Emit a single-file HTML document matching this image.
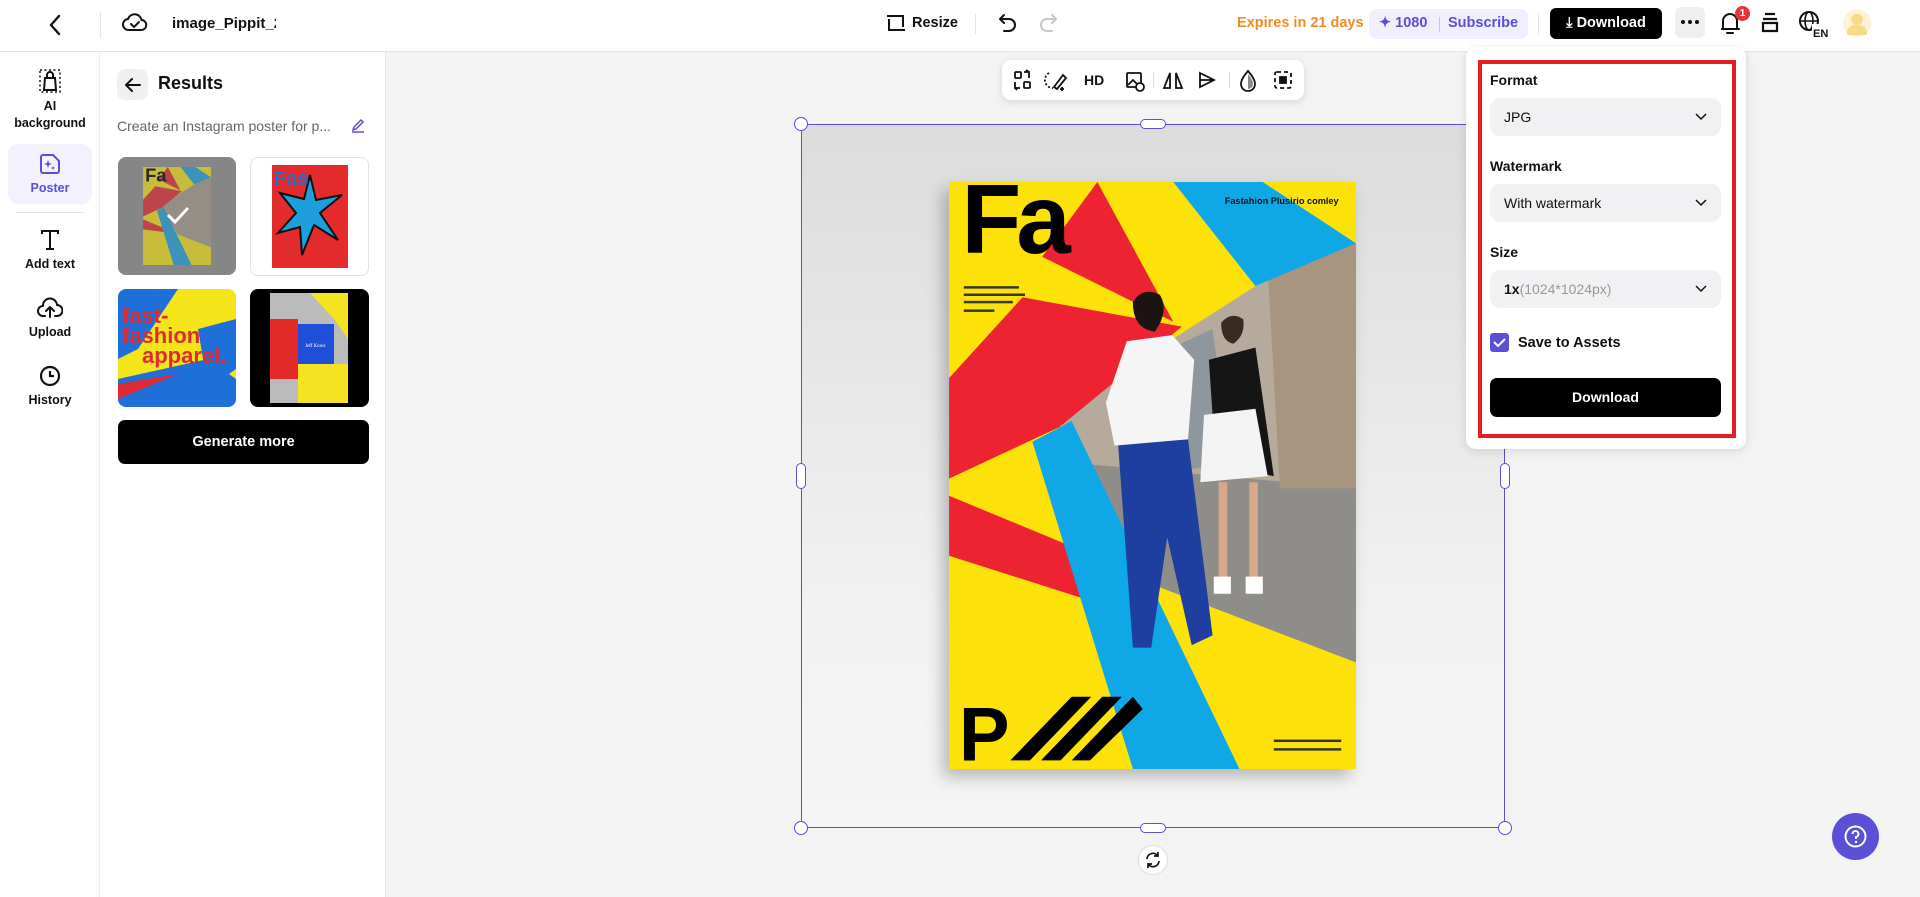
<!DOCTYPE html>
<html><head><meta charset="utf-8"><style>
*{box-sizing:border-box;margin:0;padding:0}
body{width:1920px;height:897px;overflow:hidden;font-family:"Liberation Sans",Arial,sans-serif;background:#f3f3f4;position:relative;color:#111}
.abs{position:absolute}
#top{left:0;top:0;width:1920px;height:52px;background:#fff;border-bottom:1px solid #e6e6e6}
#rail{left:0;top:52px;width:100px;height:845px;background:#fff;border-right:1px solid #eee}
#panel{left:100px;top:52px;width:286px;height:845px;background:#fff;border-right:1px solid #e6e6e6}
.ri{position:absolute;left:0;width:100px;text-align:center;font-size:12.5px;font-weight:bold;color:#111;line-height:17px}
.ri svg{display:block;margin:0 auto 4px}
.b{font-weight:bold}
.sel{background:#f1f0f2;border-radius:10px;height:38px;display:flex;align-items:center;padding:0 14px;font-size:14px;justify-content:space-between}
.lbl{font-size:14px;font-weight:bold}
.handle{position:absolute;width:14px;height:14px;border:1.5px solid #5a4fd6;background:#fff;border-radius:50%}
</style></head><body>

<div id="top" class="abs">
  <svg class="abs" style="left:47px;top:13px" width="16" height="24" viewBox="0 0 16 24"><path d="M12 3 L4 12 L12 21" fill="none" stroke="#111" stroke-width="2.4" stroke-linecap="round" stroke-linejoin="round"/></svg>
  <div class="abs" style="left:100px;top:12px;width:1px;height:26px;background:#e5e5e5"></div>
  <svg class="abs" style="left:122px;top:11px" width="26" height="22" viewBox="0 0 26 22"><path d="M7 19 H19 A5 5 0 0 0 19.5 9 A7 7 0 0 0 6 8 A5.5 5.5 0 0 0 7 19Z" fill="none" stroke="#111" stroke-width="2"/><path d="M9 13 L12 16 L17 11" fill="none" stroke="#111" stroke-width="2" stroke-linecap="round"/></svg>
  <div class="abs b" style="left:172px;top:15px;font-size:15px;width:104px;overflow:hidden;white-space:nowrap">image_Pippit_20</div>
  <svg class="abs" style="left:886px;top:13px" width="20" height="20" viewBox="0 0 20 20"><path d="M3 6 V17 H6 M3 4 V2 M17 14 V3 H14 M17 16 V18 M1 3 H15 M5 17 H19" fill="none" stroke="#111" stroke-width="2"/></svg>
  <div class="abs b" style="left:912px;top:15px;font-size:14.5px">Resize</div>
  <div class="abs" style="left:975px;top:14px;width:1px;height:20px;background:#e5e5e5"></div>
  <svg class="abs" style="left:998px;top:12px" width="20" height="22" viewBox="0 0 20 22"><path d="M6 3 L2 7 L6 11 M2 7 H11 A6 6 0 0 1 11 19 H6" fill="none" stroke="#111" stroke-width="2" stroke-linecap="round" stroke-linejoin="round"/></svg>
  <svg class="abs" style="left:1038px;top:12px" width="20" height="22" viewBox="0 0 20 22"><path d="M14 3 L18 7 L14 11 M18 7 H9 A6 6 0 0 0 9 19 H14" fill="none" stroke="#c8c8c8" stroke-width="2" stroke-linecap="round" stroke-linejoin="round"/></svg>
  <div class="abs b" style="left:1237px;top:15px;font-size:14.5px;color:#f28b1f">Expires in 21 days</div>
  <div class="abs" style="left:1369px;top:9px;width:159px;height:30px;background:#f1effd;border-radius:8px"></div>
  <div class="abs b" style="left:1379px;top:15px;font-size:14.5px;color:#5b4fd8">✦ 1080</div>
  <div class="abs" style="left:1439px;top:17px;width:1px;height:15px;background:#c9c3f0"></div>
  <div class="abs b" style="left:1448px;top:15px;font-size:14.5px;color:#5b4fd8">Subscribe</div>
  <div class="abs" style="left:1538px;top:14px;width:1px;height:20px;background:#e5e5e5"></div>
  <div class="abs" style="left:1550px;top:8px;width:112px;height:31px;background:#000;border-radius:6px;color:#fff;font-size:14.5px;font-weight:bold;text-align:center;line-height:31px">⤓ Download</div>
  <div class="abs" style="left:1675px;top:7px;width:30px;height:31px;background:#efefef;border-radius:6px"></div>
  <svg class="abs" style="left:1679px;top:19px" width="22" height="6"><circle cx="4" cy="3" r="2" fill="#111"/><circle cx="11" cy="3" r="2" fill="#111"/><circle cx="18" cy="3" r="2" fill="#111"/></svg>
  <svg class="abs" style="left:1719px;top:11px" width="22" height="24" viewBox="0 0 22 24"><path d="M4 18 V10 A7 7 0 0 1 18 10 V18 H2 H20 M8 22 H14" fill="none" stroke="#111" stroke-width="2" stroke-linecap="round"/></svg>
  <div class="abs" style="left:1735px;top:6px;width:15px;height:15px;border-radius:50%;background:#e8323c;color:#fff;font-size:10px;font-weight:bold;text-align:center;line-height:15px">1</div>
  <svg class="abs" style="left:1760px;top:12px" width="20" height="22" viewBox="0 0 20 22"><path d="M5 2 H15 M3 7 H17 M3 11 H17 V19 H3 Z" fill="none" stroke="#111" stroke-width="2.2"/></svg>
  <svg class="abs" style="left:1798px;top:10px" width="32" height="28" viewBox="0 0 32 28"><circle cx="11" cy="11" r="9" fill="none" stroke="#111" stroke-width="2"/><ellipse cx="11" cy="11" rx="4" ry="9" fill="none" stroke="#111" stroke-width="1.6"/><path d="M2 11 H20" stroke="#111" stroke-width="1.6"/><rect x="14" y="14" width="18" height="14" fill="#fff"/><text x="15" y="27" font-size="11" font-weight="bold" font-family="Liberation Sans" fill="#111">EN</text></svg>
  <div class="abs" style="left:1843px;top:9px;width:28px;height:28px;border-radius:50%;background:#fdf1d6"></div>
  <div class="abs" style="left:1851px;top:14px;width:12px;height:11px;border-radius:6px;background:#fbd98a"></div>
  <div class="abs" style="left:1847px;top:25px;width:20px;height:10px;border-radius:8px 8px 2px 2px;background:#fbd98a"></div>
</div>

<div id="rail" class="abs">
  <div class="ri" style="top:16px"><svg width="24" height="26" viewBox="0 0 24 26"><rect x="2" y="2" width="20" height="22" fill="none" stroke="#111" stroke-width="1.5" stroke-dasharray="2 2.5"/><path d="M6 22 L7 10 H17 L18 22 Z M9 10 V7 A3 3 0 0 1 15 7 V10" fill="none" stroke="#111" stroke-width="2"/></svg>AI<br>background</div>
  <div class="abs" style="left:8px;top:92px;width:84px;height:60px;background:#f3f1fd;border-radius:10px"></div>
  <div class="ri" style="top:100px;color:#5b4fd8"><svg width="24" height="24" viewBox="0 0 24 24"><path d="M3 5 A2 2 0 0 1 5 3 H15 L21 9 V19 A2 2 0 0 1 19 21 H5 A2 2 0 0 1 3 19 Z" fill="none" stroke="#5b4fd8" stroke-width="2"/><path d="M10 8 L11 11 L14 12 L11 13 L10 16 L9 13 L6 12 L9 11Z M15 14 l.6 1.4 1.4.6-1.4.6-.6 1.4-.6-1.4-1.4-.6 1.4-.6z" fill="#5b4fd8"/></svg>Poster</div>
  <div class="abs" style="left:16px;top:160px;width:68px;height:1px;background:#e5e5e5"></div>
  <div class="ri" style="top:176px"><svg width="24" height="24" viewBox="0 0 24 24"><path d="M4 6 V3 H20 V6 M12 3 V21 M8 21 H16" fill="none" stroke="#111" stroke-width="2"/></svg>Add text</div>
  <div class="ri" style="top:244px"><svg width="26" height="24" viewBox="0 0 26 24"><path d="M8 20 H6 A5 5 0 0 1 6 10 A7 7 0 0 1 20 9 A5 5 0 0 1 20 20 H18 M13 21 V12 M9 15 L13 11 L17 15" fill="none" stroke="#111" stroke-width="2" stroke-linecap="round" stroke-linejoin="round"/></svg>Upload</div>
  <div class="ri" style="top:312px"><svg width="24" height="24" viewBox="0 0 24 24"><circle cx="12" cy="12" r="9" fill="none" stroke="#111" stroke-width="2.2"/><path d="M12 7 V12 H16" fill="none" stroke="#111" stroke-width="2.2"/></svg>History</div>
</div>

<div id="panel" class="abs">
  <div class="abs" style="left:17px;top:17px;width:31px;height:31px;background:#f0f0f0;border-radius:8px"></div>
  <svg class="abs" style="left:23px;top:23px" width="20" height="20" viewBox="0 0 20 20"><path d="M17 10 H3 M9 4 L3 10 L9 16" fill="none" stroke="#111" stroke-width="2" stroke-linecap="round" stroke-linejoin="round"/></svg>
  <div class="abs b" style="left:58px;top:21px;font-size:18px">Results</div>
  <div class="abs" style="left:17px;top:66px;font-size:14px;color:#666">Create an Instagram poster for p...</div>
  <svg class="abs" style="left:250px;top:66px" width="16" height="16" viewBox="0 0 16 16"><path d="M3 12 L4 9 L11 2 L13 4 L6 11 Z M2 14 H14" fill="none" stroke="#5b4fd8" stroke-width="1.5"/></svg>
  <div class="abs" style="left:18px;top:105px;width:118px;height:118px;background:#8e8e8e;border-radius:8px;overflow:hidden">
    <svg class="abs" style="left:24px;top:10px" width="70" height="98" viewBox="0 0 332 479"><rect width="332" height="479" fill="#f2e21a"/><polygon points="332,50 250,85 145,152 87,190 170,330 332,392" fill="#a39a90"/><polygon points="76,61 121,0 183,114" fill="#e02a33"/><polygon points="60,94 190,118 90,200 0,242 0,160" fill="#e02a33"/><polygon points="0,256 169,326 0,305" fill="#e02a33"/><polygon points="183,0 256,0 332,50 250,85" fill="#1ea0dd"/><polygon points="68,212 100,195 237,479 150,479" fill="#1ea0dd"/><text x="10" y="70" font-size="90" font-weight="bold" fill="#000" font-family="Liberation Sans">Fa</text></svg>
    <div class="abs" style="left:0;top:0;width:118px;height:118px;background:rgba(120,120,120,.35)"></div>
    <svg class="abs" style="left:48px;top:48px" width="24" height="20"><path d="M2 10 L9 17 L22 3" fill="none" stroke="#fff" stroke-width="3"/></svg>
  </div>
  <div class="abs" style="left:150px;top:105px;width:119px;height:119px;background:#fff;border:1px solid #e2e2e2;border-radius:8px;overflow:hidden">
    <svg class="abs" style="left:21px;top:7px" width="76" height="103" viewBox="0 0 76 103"><rect width="76" height="103" fill="#e32b2e"/><polygon points="38,10 44,35 70,30 48,48 66,75 42,60 30,90 28,62 6,68 24,48 8,28 32,34" fill="#1d9fdc" stroke="#111" stroke-width="2"/><text x="2" y="20" font-size="20" font-weight="bold" fill="#1d6fd0" font-family="Liberation Sans">Fas</text></svg>
  </div>
  <div class="abs" style="left:18px;top:237px;width:118px;height:118px;border-radius:8px;overflow:hidden;background:#f4e41a">
    <svg width="118" height="118" viewBox="0 0 118 118"><polygon points="0,0 60,0 20,60 0,70" fill="#1f6fd8"/><polygon points="0,90 90,70 118,90 118,118 0,118" fill="#1f6fd8"/><polygon points="80,40 118,30 118,80 90,100" fill="#1f6fd8"/><polygon points="0,95 60,85 0,110" fill="#e02a33"/><text x="4" y="34" font-size="22" font-weight="bold" fill="#e02a33" font-family="Liberation Sans">fast-</text><text x="4" y="54" font-size="22" font-weight="bold" fill="#e02a33" font-family="Liberation Sans">fashion</text><text x="24" y="74" font-size="22" font-weight="bold" fill="#e02a33" font-family="Liberation Sans">apparel.</text></svg>
  </div>
  <div class="abs" style="left:150px;top:237px;width:119px;height:118px;border-radius:8px;overflow:hidden;background:#000">
    <svg width="119" height="118" viewBox="0 0 119 118"><rect x="20" y="4" width="78" height="110" fill="#bbb"/><rect x="20" y="30" width="28" height="60" fill="#e22a2a"/><rect x="48" y="35" width="36" height="40" fill="#1f4fd8"/><rect x="48" y="75" width="50" height="39" fill="#f3e320"/><polygon points="60,4 98,4 98,50 84,30" fill="#f3e320"/><text x="55" y="58" font-size="5" fill="#fff" font-family="Liberation Serif">Jeff Koois</text></svg>
  </div>
  <div class="abs" style="left:18px;top:368px;width:251px;height:44px;background:#000;border-radius:7px;color:#fff;font-size:14.5px;font-weight:bold;text-align:center;line-height:44px">Generate more</div>
</div>

<div class="abs" style="left:801px;top:124px;width:704px;height:704px;background:linear-gradient(#dcdcdc,#f2f2f2 70%,#f5f5f5)"></div>
<div class="abs" style="left:801px;top:124px;width:704px;height:704px;border:1.5px solid #5a4fd6"></div>
<div class="handle" style="left:794px;top:117px"></div>
<div class="handle" style="left:1498px;top:117px"></div>
<div class="handle" style="left:794px;top:821px"></div>
<div class="handle" style="left:1498px;top:821px"></div>
<div class="abs" style="left:1140px;top:119px;width:26px;height:10px;border:1.5px solid #5a4fd6;background:#fff;border-radius:5px"></div>
<div class="abs" style="left:1140px;top:823px;width:26px;height:10px;border:1.5px solid #5a4fd6;background:#fff;border-radius:5px"></div>
<div class="abs" style="left:796px;top:463px;width:10px;height:26px;border:1.5px solid #5a4fd6;background:#fff;border-radius:5px"></div>
<div class="abs" style="left:1500px;top:463px;width:10px;height:26px;border:1.5px solid #5a4fd6;background:#fff;border-radius:5px"></div>
<div class="abs" style="left:1138px;top:845px;width:30px;height:30px;border-radius:50%;background:#fff;border:1px solid #ddd"></div>
<svg class="abs" style="left:1144px;top:851px" width="18" height="18" viewBox="0 0 18 18"><path d="M3 8 A6 6 0 0 1 14 5 M15 10 A6 6 0 0 1 4 13 M14 1 V5 H10 M4 17 V13 H8" fill="none" stroke="#111" stroke-width="1.7"/></svg>

<!-- poster -->
<svg class="abs" style="left:949px;top:182px;filter:drop-shadow(-6px 8px 8px rgba(0,0,0,.25))" width="407" height="587" viewBox="0 0 332 479">
  <rect width="332" height="479" fill="#fde20a"/>
  <polygon points="332,50 250,85 145,152 87,190 170,330 332,392" fill="#b6aa9c"/>
  <polygon points="150,150 215,120 230,230 150,240" fill="#8e969e"/>
  <polygon points="110,230 332,250 332,392 170,330" fill="#8f8d8a"/>
  <polygon points="260,70 332,50 332,250 270,250" fill="#a8957f"/>
  <polygon points="76,61 121,0 183,114" fill="#ee2332"/>
  <polygon points="60,94 190,118 90,200 0,242 0,160" fill="#ee2332"/>
  <polygon points="0,256 169,326 110,340 0,305" fill="#ee2332"/>
  <polygon points="183,0 256,0 332,50 250,85" fill="#0fa7e6"/>
  <polygon points="68,212 100,195 237,479 150,479" fill="#0fa7e6"/>
  <path d="M150 98 Q158 85 172 92 Q180 105 168 122 Q150 120 150 98Z" fill="#1a1412"/>
  <polygon points="145,130 182,125 200,145 195,210 135,215 128,180" fill="#f5f5f5"/>
  <polygon points="138,215 195,210 215,370 198,378 178,290 165,380 150,380" fill="#1e3fa0"/>
  <path d="M222 115 Q230 105 240 112 Q242 125 232 132 Q222 130 222 115Z" fill="#3a2a22"/>
  <polygon points="212,145 250,135 265,240 240,235 208,240 215,190" fill="#151515"/>
  <polygon points="208,190 250,185 260,240 205,245" fill="#f3f3f3"/>
  <rect x="220" y="245" width="7" height="85" fill="#d9a88a"/><rect x="245" y="245" width="7" height="85" fill="#d9a88a"/>
  <rect x="216" y="322" width="14" height="14" fill="#fff"/><rect x="242" y="322" width="14" height="14" fill="#fff"/>
  <text x="10" y="58" font-size="80" font-weight="bold" fill="#000" font-family="Liberation Sans" letter-spacing="-4">Fa</text>
  <text x="225" y="18" font-size="7.5" font-weight="bold" fill="#111" font-family="Liberation Sans">Fastahion Plusirio comley</text>
  <rect x="12" y="85" width="45" height="2" fill="#333"/><rect x="12" y="91" width="50" height="2" fill="#333"/><rect x="12" y="97" width="40" height="2" fill="#333"/><rect x="12" y="104" width="25" height="2" fill="#333"/>
  <text x="8" y="472" font-size="62" font-weight="bold" fill="#000" font-family="Liberation Sans">P</text>
  <polygon points="50,472 100,420 116,420 66,472" fill="#000"/><polygon points="75,472 125,420 141,420 91,472" fill="#000"/><polygon points="100,472 150,420 158,430 115,472" fill="#000"/>
  <rect x="265" y="455" width="55" height="2" fill="#333"/><rect x="265" y="462" width="55" height="2" fill="#333"/>
</svg>

<div class="abs" style="left:1002px;top:60px;width:302px;height:40px;background:#fff;border-radius:9px;box-shadow:0 2px 8px rgba(0,0,0,.12)"></div>
<svg class="abs" style="left:1002px;top:60px" width="302" height="40" viewBox="0 0 302 40">
  <g fill="none" stroke="#111" stroke-width="1.8">
    <rect x="13" y="12" width="6" height="6" rx="1"/><rect x="22" y="22" width="6" height="6" rx="1"/><path d="M13 22 V28 H18 M22 12 H27 V18 M24 10 L27 12 M15 30 L13 28"/>
    <path d="M47 13 A8 8 0 0 0 51 28" stroke-dasharray="2 2"/><path d="M52 27 L61 15 L64 18 L55 29 Z M60 27 L60 31 M58 29 L62 29"/>
    <rect x="125" y="13" width="14" height="14" rx="1"/><path d="M126 25 L131 20 L135 24"/><circle cx="138" cy="27" r="4" fill="#fff"/>
    <path d="M168 13 L162 28 H168 Z M174 13 L180 28 H174 Z"/>
    <path d="M198 13 L212 20 L198 27 Z M198 20 H212"/>
    <path d="M246 11 Q253 19 253 24 A7 7 0 0 1 239 24 Q239 19 246 11 Z"/>
    <rect x="273" y="12" width="16" height="16" rx="2" stroke-dasharray="4 3"/><rect x="278" y="17" width="6" height="6" fill="#111"/>
  </g>
  <path d="M246 14 Q251 20 251 24 A5 5 0 0 1 246 29 Z" fill="#888"/>
  <text x="82" y="25" font-size="14" font-weight="bold" font-family="Liberation Sans" fill="#111">HD</text>
  <rect x="151" y="12" width="1" height="16" fill="#ddd"/><rect x="227" y="12" width="1" height="16" fill="#ddd"/>
</svg>

<div class="abs" style="left:1466px;top:47px;width:280px;height:402px;background:#fff;border-radius:10px;box-shadow:0 2px 10px rgba(0,0,0,.12)"></div>
<div class="abs" style="left:1478px;top:60px;width:258px;height:378px;border:4px solid #e51d25"></div>
<div class="abs lbl" style="left:1490px;top:72px">Format</div>
<div class="abs sel" style="left:1490px;top:98px;width:231px">JPG<svg width="12" height="8"><path d="M1 1 L6 6 L11 1" fill="none" stroke="#111" stroke-width="1.5"/></svg></div>
<div class="abs lbl" style="left:1490px;top:158px">Watermark</div>
<div class="abs sel" style="left:1490px;top:184px;width:231px">With watermark<svg width="12" height="8"><path d="M1 1 L6 6 L11 1" fill="none" stroke="#111" stroke-width="1.5"/></svg></div>
<div class="abs lbl" style="left:1490px;top:244px">Size</div>
<div class="abs sel" style="left:1490px;top:270px;width:231px"><span><b>1x</b><span style="color:#999">(1024*1024px)</span></span><svg width="12" height="8"><path d="M1 1 L6 6 L11 1" fill="none" stroke="#111" stroke-width="1.5"/></svg></div>
<div class="abs" style="left:1490px;top:333px;width:19px;height:19px;background:#5b4fd8;border-radius:3px"></div>
<svg class="abs" style="left:1493px;top:337px" width="13" height="11"><path d="M1 5 L5 9 L12 2" fill="none" stroke="#fff" stroke-width="2"/></svg>
<div class="abs lbl" style="left:1518px;top:335px;font-size:14.5px">Save to Assets</div>
<div class="abs" style="left:1490px;top:378px;width:231px;height:39px;background:#000;border-radius:7px;color:#fff;font-size:14px;font-weight:bold;text-align:center;line-height:39px">Download</div>

<div class="abs" style="left:1832px;top:813px;width:47px;height:47px;border-radius:50%;background:#5b4fd8"></div>
<svg class="abs" style="left:1843px;top:824px" width="25" height="25" viewBox="0 0 25 25"><circle cx="12.5" cy="12.5" r="10" fill="none" stroke="#fff" stroke-width="2"/><path d="M9.5 10 A3 3 0 1 1 13 13 V15" fill="none" stroke="#fff" stroke-width="2"/><circle cx="13" cy="18" r="1.2" fill="#fff"/></svg>
</body></html>
